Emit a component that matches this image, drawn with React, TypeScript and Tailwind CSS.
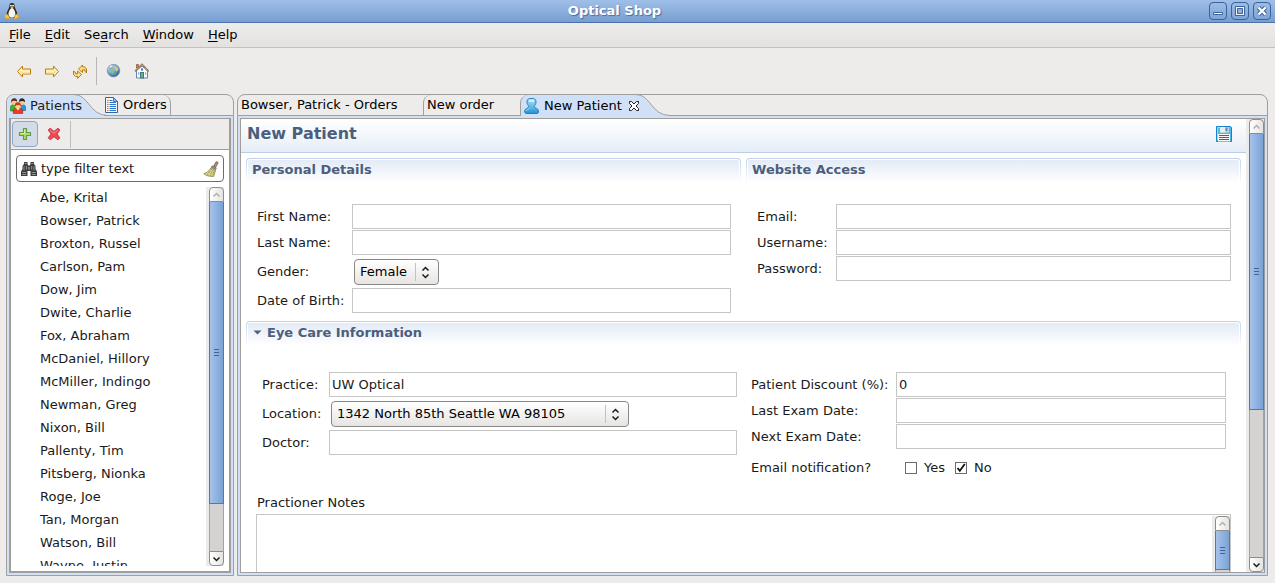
import { useState, type ReactNode } from "react";

const patients = [
  "Abe, Krital",
  "Bowser, Patrick",
  "Broxton, Russel",
  "Carlson, Pam",
  "Dow, Jim",
  "Dwite, Charlie",
  "Fox, Abraham",
  "McDaniel, Hillory",
  "McMiller, Indingo",
  "Newman, Greg",
  "Nixon, Bill",
  "Pallenty, Tim",
  "Pitsberg, Nionka",
  "Roge, Joe",
  "Tan, Morgan",
  "Watson, Bill",
  "Wayne, Justin",
];

const menus: [string, string, string][] = [
  ["", "F", "ile"],
  ["", "E", "dit"],
  ["Se", "a", "rch"],
  ["", "W", "indow"],
  ["", "H", "elp"],
];

/* ---------- icons ---------- */

function Penguin() {
  return (
    <svg width="16" height="18" viewBox="0 0 16 18" aria-hidden="true">
      <path d="M8 1C6 1 5.3 2.2 5.4 4C5.5 6 3.4 8 2.8 11C2.6 12.6 3.3 15 5 16H11C13 15 13.5 12.6 13 10.5C12.4 8 10.6 6 10.6 4C10.6 2.2 10 1 8 1Z" fill="#2a2623" />
      <path d="M8 5.5C6 6.6 4.4 9.5 4.4 12C4.6 14.6 6 15.8 8 15.8C10 15.8 11.2 14.6 11.4 12C11.4 9.5 10 6.6 8 5.5Z" fill="#f4f4f2" />
      <circle cx="6.9" cy="3.6" r="0.9" fill="#fff" />
      <circle cx="9.1" cy="3.6" r="0.9" fill="#fff" />
      <path d="M6.2 5L8 4.2L9.8 5L8 6.4Z" fill="#f5b21c" />
      <path d="M0.8 13.4L3 12L5.8 15.4L5.2 17L0.8 16Z" fill="#fbc63a" stroke="#d99316" strokeWidth="0.5" />
      <path d="M10.6 13.6L12.8 12L15.2 14.8L11.6 17L10.3 16.4Z" fill="#fbc63a" stroke="#d99316" strokeWidth="0.5" />
    </svg>
  );
}

function Arrow({ right = false }: { right?: boolean }) {
  return (
    <svg width="16" height="16" viewBox="0 0 16 16" aria-hidden="true">
      <path
        d={right ? "M14.5 8.5L9.5 3V6H1.5V11H9.5V14Z" : "M1.5 8.5L6.5 3V6H14.5V11H6.5V14Z"}
        fill="#fdf0b4"
        stroke="#b97d10"
        strokeLinejoin="round"
      />
      <path d={right ? "M2.5 10H10.5V9L12 8.5" : "M13.5 10H5.5V9L4 8.5"} fill="none" stroke="#f9d979" />
    </svg>
  );
}

function RefreshIcon() {
  return (
    <svg width="16" height="16" viewBox="0 0 16 16" aria-hidden="true">
      <g fill="#fbe08a" stroke="#b97d10" strokeLinejoin="round">
        <path d="M6.5 6L10.5 2V3.8H12.5L14.5 6V10L13 8.2V6.8H10.5V9.5Z" />
        <path d="M9.5 11.5L5.5 15.5V13.5H3.5L1.5 11.5V8L3.5 9.5V10.8H5.5V8Z" />
      </g>
    </svg>
  );
}

function Globe() {
  return (
    <svg width="16" height="16" viewBox="0 0 16 16" aria-hidden="true">
      <defs>
        <radialGradient id="globe" cx="0.3" cy="0.28" r="0.85">
          <stop offset="0" stopColor="#dcecfa" />
          <stop offset="0.5" stopColor="#6f9fd0" />
          <stop offset="1" stopColor="#27578c" />
        </radialGradient>
      </defs>
      <circle cx="8.5" cy="7.6" r="6.3" fill="url(#globe)" stroke="#6e86a2" strokeWidth="0.6" />
      <path d="M4 4.8L7 3.4L9 5.2L8 7L9.2 9L7.8 11.6L6 8.8L4 7.4Z" fill="#8ebb9c" />
      <path d="M9.4 2.6L12.6 4.2L13.6 7L11.6 8.4L10 6.6Z" fill="#cdcb86" />
      <path d="M8.4 9.6L11.4 9L10.2 12.2Z" fill="#6fa96d" />
      <path d="M5 4.2L7 3" stroke="#fff" strokeWidth="1" />
    </svg>
  );
}

function House() {
  return (
    <svg width="16" height="16" viewBox="0 0 16 16" aria-hidden="true">
      <path d="M3.5 7.5L9 3L14.5 7.5V15H3.5Z" fill="#fafcff" stroke="#6487ae" />
      <path d="M3.5 1.5H5.5V5H3.5Z" fill="#c98a70" stroke="#8a5d48" strokeWidth="0.8" />
      <path d="M2 8.4L9 1.6L15.6 8.4" fill="none" stroke="#8d6c4e" strokeWidth="1.8" />
      <path d="M2.4 8L9 1.6L15.2 8" fill="none" stroke="#ecd7b4" strokeWidth="0.8" strokeDasharray="1.2 0.8" />
      <rect x="8" y="5.4" width="2" height="2.2" fill="#4378b8" />
      <rect x="7.5" y="9.5" width="3" height="5.5" fill="#76b94c" stroke="#3e72a5" />
      <rect x="5" y="9.5" width="1.3" height="2" fill="#7ba0c8" />
      <rect x="12" y="9.5" width="1.2" height="2" fill="#7ba0c8" />
    </svg>
  );
}

function PeopleIcon() {
  return (
    <svg width="16" height="16" viewBox="0 0 16 16" aria-hidden="true">
      <path d="M0.5 13V9.5C0.5 7.4 2 6.4 4 6.4S7.5 8 7.5 9.5V13Z" fill="#45b02f" stroke="#1d7d15" strokeWidth="0.6" />
      <path d="M8.5 12.5V9.5C8.5 7.4 10.4 6.4 12.2 6.4S15.6 7.6 15.6 9.5V12.5Z" fill="#2f93d4" stroke="#155e94" strokeWidth="0.6" />
      <circle cx="4.2" cy="4.2" r="2.7" fill="#f6c791" />
      <path d="M1.2 4.8V3C1.4 1 3 0.3 4.2 0.3S7.4 1 7.1 3.8C6 2.6 4 2.4 2.4 3Z" fill="#5c2912" />
      <circle cx="12" cy="4.2" r="2.7" fill="#f6c791" />
      <path d="M9.1 4V3C9.2 1 11 0.3 12 0.3S15.2 1 15 4.2C13.6 2.6 11.2 2.6 9.1 4Z" fill="#33231b" />
      <path d="M3.3 15.6V13C3.3 10.8 5.4 10 8 10S12.7 10.8 12.7 13V15.6Z" fill="#ee3a1e" stroke="#a31a08" strokeWidth="0.6" />
      <circle cx="8" cy="8" r="2.9" fill="#f9cf98" />
      <path d="M4.9 8.3V6.7C5.1 4.8 6.8 4.2 8 4.2S11.1 4.8 11.1 8.2C10 6.6 7.2 6.4 4.9 8.3Z" fill="#b8431a" />
      <path d="M6.6 10.6L8 12.4L9.4 10.6Z" fill="#fff3d8" />
    </svg>
  );
}

function DocumentIcon() {
  return (
    <svg width="16" height="16" viewBox="0 0 16 16" aria-hidden="true">
      <path d="M1.5 0.5H9.5L13.5 4.5V15.5H1.5Z" fill="#f2f7fd" stroke="#2f66a6" />
      <path d="M9.5 0.5V4.5H13.5Z" fill="#9fc0e6" stroke="#2f66a6" strokeWidth="0.8" />
      <path d="M5.5 3.5H8.5M5.5 5.5H12M5.5 7.5H12M5.5 9.5H12M5.5 11.5H12M5.5 13.5H12" stroke="#2f7ad0" strokeWidth="1.1" />
      <path d="M3 3.5H4.6M3 5.5H4.6M3 7.5H4.6M3 9.5H4.6M3 11.5H4.6M3 13.5H4.6" stroke="#b9844e" strokeWidth="1.1" />
    </svg>
  );
}

function PersonIcon() {
  return (
    <svg width="16" height="18" viewBox="0 0 16 18" aria-hidden="true">
      <defs>
        <linearGradient id="person" x1="0" y1="0" x2="0" y2="1">
          <stop offset="0" stopColor="#a9dcf7" />
          <stop offset="0.55" stopColor="#6bbbe8" />
          <stop offset="1" stopColor="#1f8fd6" />
        </linearGradient>
      </defs>
      <path
        d="M5.4 1.5H9.6C11.2 1.9 12 3.2 12 5C12 7 11 8.2 10.2 9.2C10.2 10.4 11 10.9 12.4 11.3C14 12 14.5 13.4 14.5 15.3L13.6 16.5H1.9L0.6 15.3C0.6 13.4 1.2 12 2.8 11.3C4 10.9 4.8 10.4 4.8 9.2C4 8.2 3 7 3 5C3 3.2 3.8 1.9 5.4 1.5Z"
        fill="url(#person)"
        stroke="#2382bf"
      />
      <path d="M5.6 2.6H9.4L10.4 5H4.6Z" fill="#e3f5fe" opacity="0.8" />
      <path d="M2 14C2.5 12.5 4 12.3 5.5 11.6" fill="none" stroke="#a5dcf8" />
    </svg>
  );
}

function PlusIcon() {
  return (
    <svg width="16" height="16" viewBox="0 0 16 16" aria-hidden="true">
      <path d="M6.5 2.5H9.5V6.5H13.5V9.5H9.5V13.5H6.5V9.5H2.5V6.5H6.5Z" fill="#b7d95e" stroke="#5a9c53" strokeWidth="1.2" strokeLinejoin="round" />
      <path d="M7.5 3.5V7.5H3.5" fill="none" stroke="#dcee9b" />
    </svg>
  );
}

function DeleteIcon() {
  return (
    <svg width="16" height="16" viewBox="0 0 16 16" aria-hidden="true">
      <path d="M2.2 4L4.2 2.2L8 5.4L12 2.2L13.8 4L11 8L13.8 11.8L12 13.8L8 10.8L4.2 13.8L2.2 11.8L5.2 8Z" fill="#ec4a52" stroke="#cf3540" strokeLinejoin="round" />
      <path d="M3.8 4.2L8 7.3L12 4" fill="none" stroke="#f58c8e" />
    </svg>
  );
}

function Binoculars() {
  return (
    <svg width="16" height="16" viewBox="0 0 16 16" aria-hidden="true">
      <path d="M3 1H6.5V3L7.3 4.5H8.7L9.5 3V1H13V3L14.5 5V8L16 10.5V15H9.5V10H6.5V15H0V10.5L1.5 8V5L3 3Z" fill="#3c3f3e" />
      <path d="M3.7 2.5H5.7M10.3 2.5H12.3M3 5V9.5M5.5 5V8.5M10.7 5V8.5M13 5V9.5" stroke="#8e9290" />
      <path d="M1.2 11.5H5.2M10.8 11.5H14.8M1.2 13.5H5.2M10.8 13.5H14.8" stroke="#a9adab" strokeWidth="0.8" />
      <path d="M7 6H9V8.5H7Z" fill="#7d817f" />
    </svg>
  );
}

function Broom() {
  return (
    <svg width="16" height="16" viewBox="0 0 16 16" aria-hidden="true">
      <path d="M13.2 0.6L15.2 1.6L12.6 6.6L10.4 5.4Z" fill="#a98b77" stroke="#6f5546" strokeWidth="0.7" />
      <path d="M9 4.8L13.4 7L12.6 8.6L8.2 6.6Z" fill="#8c8f93" stroke="#595c60" strokeWidth="0.5" />
      <path d="M8 6.8L12.6 9L10.6 15.5L6.5 15.2L3.5 14.5L0.8 12.8C3.5 12 6.5 9.6 8 6.8Z" fill="#ddd38a" stroke="#8a8348" strokeWidth="0.8" />
      <path d="M8.6 8.2L4 13.8M10 8.8L7 14.8M11.4 9.4L9.6 15" stroke="#77713e" strokeWidth="0.9" strokeDasharray="1 1" />
    </svg>
  );
}

function Floppy() {
  return (
    <svg width="16" height="16" viewBox="0 0 16 16" aria-hidden="true">
      <path d="M0.5 0.5H14.5L15.5 1.5V15.5H0.5Z" fill="#4fb9ec" stroke="#1a83c4" />
      <path d="M1.5 14V1.5H4" fill="none" stroke="#9bdcf9" />
      <path d="M4 1H13V6.5H4Z" fill="#c9d3d9" />
      <path d="M4 1H9V6.5H4Z" fill="#e9eef0" />
      <rect x="9.5" y="1.5" width="2" height="3.5" fill="#5c8db3" />
      <rect x="2" y="8" width="12" height="7.5" fill="#f6f6f4" />
      <path d="M3 9.5H13M3 11.5H13M3 13.5H13" stroke="#5b6063" />
    </svg>
  );
}

function CloseTab() {
  return (
    <svg width="12" height="12" viewBox="0 0 12 12" aria-hidden="true">
      <path
        d="M1.5 1.5H3.5L6 4L8.5 1.5H10.5V3.5L8 6L10.5 8.5V10.5H8.5L6 8L3.5 10.5H1.5V8.5L4 6L1.5 3.5Z"
        fill="#fff"
        stroke="#222"
      />
    </svg>
  );
}

/* ---------- shared pieces ---------- */

function TabCurve() {
  return (
    <svg width="34" height="21" viewBox="0 0 34 21" className="shrink-0" aria-hidden="true">
      <path d="M0 0C15 0 15 20.5 34 20.5V21H0Z" fill="#d0e1f7" />
      <path d="M0 -0.5C15 -0.5 15 20.5 34 20.5" fill="none" stroke="#a19f9b" />
    </svg>
  );
}

function Chevron({ up = false, muted = false }: { up?: boolean; muted?: boolean }) {
  return (
    <svg width="9" height="6" viewBox="0 0 9 6" aria-hidden="true">
      <path
        d={up ? "M1.5 4.5L4.5 1.5L7.5 4.5" : "M1.5 1.5L4.5 4.5L7.5 1.5"}
        fill="none"
        stroke={muted ? "#b1b0ae" : "#1a1a1a"}
        strokeWidth="1.5"
      />
    </svg>
  );
}

function ScrollBar({ thumb, rest }: { thumb: number; rest: number }) {
  return (
    <div aria-hidden="true" className="flex w-[18px] shrink-0 bg-[#ecebea] pl-[3px]">
      <div className="flex w-[15px] flex-col">
        <div className="flex h-[15px] shrink-0 items-center justify-center rounded-t border border-[#8f8d8a] bg-linear-to-r from-white to-[#e4e3e1]">
          <Chevron up muted />
        </div>
        <div
          className="flex min-h-0 flex-col items-center justify-center gap-[2px] border border-t-0 border-[#4f79b4] bg-linear-to-r from-[#a5c3ea] to-[#7ba2d6]"
          style={{ flex: `${thumb} 1 0px` }}
        >
          <div className="h-px w-[5px] bg-[#3d659c]" />
          <div className="h-px w-[5px] bg-[#3d659c]" />
          <div className="h-px w-[5px] bg-[#3d659c]" />
        </div>
        <div className="min-h-0 border-x border-[#a5a3a0] bg-[#d4d3d1]" style={{ flex: `${rest} 1 0px` }} />
        <div className="flex h-[15px] shrink-0 items-center justify-center rounded-b border border-[#8f8d8a] bg-linear-to-r from-white to-[#e4e3e1]">
          <Chevron />
        </div>
      </div>
    </div>
  );
}

function SectionHead({ children, twistie = false }: { children: ReactNode; twistie?: boolean }) {
  return (
    <div className="rounded-t bg-linear-to-b from-[#c0d0ea] to-white px-px pt-px">
      <h2 className="flex h-6 items-center gap-[5px] rounded-t-[3px] border-x border-t border-white bg-linear-to-b from-[#e3ebf6] to-white pb-1 pl-1 font-bold text-[#4c5e7c]">
        {twistie && (
          <svg width="9" height="5" viewBox="0 0 9 5" className="ml-px" aria-hidden="true">
            <path d="M0.5 0.5H8.5L4.5 4.5Z" fill="#4c5e7c" />
          </svg>
        )}
        {children}
      </h2>
    </div>
  );
}

function Field({ id, label, value = "" }: { id: string; label: string; value?: string }) {
  return (
    <>
      <label htmlFor={id}>{label}</label>
      <input
        id={id}
        defaultValue={value}
        className="h-[25px] w-full min-w-0 border border-[#c6c6c6] bg-white px-[2px] outline-none"
      />
    </>
  );
}

function Combo({ id, label, options, width }: { id: string; label: string; options: string[]; width: string }) {
  return (
    <>
      <label htmlFor={id}>{label}</label>
      <div className="grid pt-[3px] pb-[2px] pl-px">
        <div className={`col-start-1 row-start-1 ml-px grid ${width}`}>
          <select
            id={id}
            className="col-start-1 row-start-1 h-[26px] w-full appearance-none rounded border border-[#8a8885] bg-linear-to-b from-white to-[#e6e5e3] pl-[5px] text-black outline-none"
          >
            {options.map((o) => (
              <option key={o}>{o}</option>
            ))}
          </select>
          <div className="pointer-events-none col-start-1 row-start-1 my-1 flex w-6 flex-col items-center justify-center gap-px justify-self-end border-l border-[#c3c2c0] pr-1">
            <Chevron up />
            <Chevron />
          </div>
        </div>
      </div>
    </>
  );
}

function WindowButton({ label, children }: { label: string; children: ReactNode }) {
  return (
    <button
      aria-label={label}
      className="flex size-[18px] items-center justify-center rounded border border-[#3b629b] bg-linear-to-b from-[#9dbce5] to-[#7fa4d6]"
    >
      <svg width="12" height="12" viewBox="0 0 12 12" aria-hidden="true">
        {children}
      </svg>
    </button>
  );
}

function Check({ label, checked, onChange }: { label: string; checked: boolean; onChange: () => void }) {
  return (
    <label className="flex items-center gap-[7px]">
      <span className="grid size-3">
        <input
          type="checkbox"
          checked={checked}
          onChange={onChange}
          className="col-start-1 row-start-1 size-3 appearance-none border border-[#6b6b6b] bg-white"
        />
        {checked && (
          <svg viewBox="0 0 12 12" className="pointer-events-none col-start-1 row-start-1 size-3" aria-hidden="true">
            <path d="M2.5 6L4.8 8.8L9.8 2" fill="none" stroke="#111" strokeWidth="1.8" />
          </svg>
        )}
      </span>
      {label}
    </label>
  );
}

/* ---------- page ---------- */

export default function App() {
  const [notify, setNotify] = useState(false);

  return (
    <div className="flex h-screen flex-col overflow-hidden bg-[#edecea] font-['DejaVu_Sans',sans-serif] text-[13px] leading-4 text-[#1a1a1a]">
      <header className="flex h-[23px] shrink-0 items-center border-b border-[#4b73ab] bg-linear-to-b from-[#9fbfe9] to-[#789ed0] pr-1 pl-1">
        <Penguin />
        <h1 className="flex-1 text-center font-bold text-white [text-shadow:1px_1px_1px_#4a6c9c]">Optical Shop</h1>
        <div className="flex gap-1">
          <WindowButton label="Minimize">
            <path d="M1.5 7.5H10.5V9.5H1.5Z" fill="#fff" stroke="#3b629b" />
          </WindowButton>
          <WindowButton label="Maximize">
            <path d="M1.5 1.5H10.5V10.5H1.5Z" fill="#f2f6fc" stroke="#3b629b" />
            <path d="M3.5 3.5H8.5V8.5H3.5Z" fill="#8fb0de" stroke="#3b629b" />
          </WindowButton>
          <WindowButton label="Close">
            <path d="M2.5 2.5L9.5 9.5M9.5 2.5L2.5 9.5" stroke="#3b629b" strokeWidth="4.4" />
            <path d="M2.5 2.5L9.5 9.5M9.5 2.5L2.5 9.5" stroke="#fff" strokeWidth="2.4" />
          </WindowButton>
        </div>
      </header>

      <nav className="flex h-[25px] shrink-0 items-center gap-[14px] border-b border-[#c3c2c0] bg-linear-to-b from-[#edecea] to-[#e3e2e0] pl-[9px] text-black">
        {menus.map(([a, key, b]) => (
          <button key={key}>
            {a}
            <span className="underline underline-offset-2">{key}</span>
            {b}
          </button>
        ))}
      </nav>

      <div className="flex h-[46px] shrink-0 items-center gap-3 pl-4">
        <button aria-label="Back"><Arrow /></button>
        <button aria-label="Forward"><Arrow right /></button>
        <button aria-label="Refresh"><RefreshIcon /></button>
        <div className="-mx-1 h-7 w-px bg-[#b9b8b6]" />
        <button aria-label="Web"><Globe /></button>
        <button aria-label="Home"><House /></button>
      </div>

      <div className="flex min-h-0 flex-1 gap-[3px] pr-[7px] pb-[7px] pl-[6px]">
        <aside className="flex w-[228px] shrink-0 flex-col rounded-t-lg border border-[#a19f9b] bg-[#edecea]">
          <div role="tablist" className="flex h-[21px] shrink-0">
            <div className="flex rounded-tl-lg bg-[#d0e1f7]">
              <button role="tab" aria-selected="true" className="relative z-10 -mr-2 flex items-center gap-1 pl-[3px]">
                <PeopleIcon />
                Patients
              </button>
            </div>
            <TabCurve />
            <button role="tab" aria-selected="false" className="-ml-1 flex items-center gap-[3px] rounded-tr-lg border-r border-b border-[#a19f9b] pr-[3px] text-black">
              <DocumentIcon />
              Orders
            </button>
            <div className="flex-1 border-b border-[#a19f9b]" />
          </div>
          <div className="flex min-h-0 flex-1 flex-col bg-[#d0e1f7] p-[2px]">
            <div className="flex min-h-0 flex-1 flex-col border-2 border-t border-[#a19d99] bg-white">
              <div className="flex h-[31px] shrink-0 items-center gap-2 border-b border-[#a19d99] bg-[#edecea] pl-px">
                <button aria-label="Add" className="flex size-[26px] items-center justify-center rounded border border-[#8ea6c8] bg-[#d3dbe7]">
                  <PlusIcon />
                </button>
                <button aria-label="Delete"><DeleteIcon /></button>
                <div className="h-[27px] w-px bg-[#c0bfbd]" />
              </div>
              <div className="flex min-h-0 flex-1 flex-col p-[5px]">
                <div className="flex h-[27px] shrink-0 items-center gap-1 rounded border border-[#6f6d6b] px-1">
                  <Binoculars />
                  <input aria-label="Filter patients" defaultValue="type filter text" className="min-w-0 flex-1 outline-none" />
                  <button aria-label="Clear filter"><Broom /></button>
                </div>
                <div className="mt-[5px] flex min-h-0 flex-1">
                  <ul className="min-w-0 flex-1 overflow-hidden pl-6">
                    {patients.map((p) => (
                      <li key={p} className="h-[23px] pt-[3px]">{p}</li>
                    ))}
                  </ul>
                  <ScrollBar thumb={302} rest={47} />
                </div>
              </div>
            </div>
          </div>
        </aside>

        <main className="flex min-w-0 flex-1 flex-col rounded-t-lg border border-[#a19f9b]">
          <div role="tablist" className="flex h-[21px] shrink-0 text-black">
            <button role="tab" aria-selected="false" className="w-[185px] border-b border-[#a19f9b] pl-[3px] text-left">
              Bowser, Patrick - Orders
            </button>
            <button role="tab" aria-selected="false" className="w-[97px] rounded-tl-lg border-b border-l border-[#a19f9b] pl-[3px] text-left">
              New order
            </button>
            <div className="flex rounded-tl-lg border-l border-[#a19f9b] bg-[#d0e1f7]">
              <div className="relative z-10 -mr-1 flex items-center gap-[6px] pl-[3px]">
                <button role="tab" aria-selected="true" className="flex items-center gap-1">
                  <PersonIcon />
                  New Patient
                </button>
                <button aria-label="Close tab"><CloseTab /></button>
              </div>
            </div>
            <TabCurve />
            <div className="flex-1 border-b border-[#a19f9b]" />
          </div>
          <div className="flex min-h-0 flex-1 flex-col bg-[#d0e1f7] p-[2px]">
            <div className="flex min-h-0 flex-1 border border-[#a19d99] bg-white">
              <div className="min-w-0 flex-1 overflow-hidden">
                <div className="flex h-[34px] items-center justify-between border-b border-[#bccde8] bg-linear-to-b from-white to-[#e6edf6] pr-[14px] pb-[3px] pl-[6px]">
                  <h2 className="text-base font-bold text-[#4c5e7c]">New Patient</h2>
                  <button aria-label="Save"><Floppy /></button>
                </div>

                <form className="px-[5px] pt-[5px]" onSubmit={(e) => e.preventDefault()}>
                  <div className="grid grid-cols-2 gap-[5px]">
                    <section>
                      <SectionHead>Personal Details</SectionHead>
                      <div className="grid grid-cols-[94px_1fr] items-center gap-x-px gap-y-px pt-[21px] pr-[10px] pl-[11px]">
                        <Field id="first" label="First Name:" />
                        <Field id="last" label="Last Name:" />
                        <Combo id="gender" label="Gender:" options={["Female", "Male"]} width="w-[85px]" />
                        <Field id="dob" label="Date of Birth:" />
                      </div>
                    </section>
                    <section>
                      <SectionHead>Website Access</SectionHead>
                      <div className="grid grid-cols-[78px_1fr] items-center gap-x-px gap-y-px pt-[21px] pr-[10px] pl-[11px]">
                        <Field id="email" label="Email:" />
                        <Field id="username" label="Username:" />
                        <Field id="password" label="Password:" />
                      </div>
                    </section>
                  </div>

                  <section className="mt-2">
                    <SectionHead twistie>Eye Care Information</SectionHead>
                    <div className="grid grid-cols-2 gap-[5px] pt-[26px]">
                      <div className="grid grid-cols-[66px_1fr] content-start items-center gap-x-px gap-y-px pr-[4px] pl-[16px]">
                        <Field id="practice" label="Practice:" value="UW Optical" />
                        <Combo id="location" label="Location:" options={["1342 North 85th Seattle WA 98105"]} width="w-[298px]" />
                        <Field id="doctor" label="Doctor:" />
                      </div>
                      <div className="pr-[15px] pl-[5px]">
                        <div className="grid grid-cols-[144px_1fr] items-center gap-x-px gap-y-px">
                          <Field id="discount" label="Patient Discount (%):" value="0" />
                          <Field id="lastexam" label="Last Exam Date:" />
                          <Field id="nextexam" label="Next Exam Date:" />
                        </div>
                        <fieldset className="mt-[11px] flex items-center gap-[10px]">
                          <legend className="float-left w-[144px]">Email notification?</legend>
                          <Check label="Yes" checked={notify} onChange={() => setNotify(true)} />
                          <Check label="No" checked={!notify} onChange={() => setNotify(false)} />
                        </fieldset>
                      </div>
                    </div>
                    <div className="px-[10px] pt-[19px]">
                      <label htmlFor="notes" className="ml-px block">Practioner Notes</label>
                      <div className="mt-[3px] flex h-[92px] border border-[#c6c6c6] pt-px">
                        <textarea id="notes" className="min-w-0 flex-1 resize-none overflow-hidden px-[2px] outline-none" />
                        <ScrollBar thumb={39} rest={20} />
                      </div>
                    </div>
                  </section>
                </form>
              </div>
              <ScrollBar thumb={276} rest={147} />
            </div>
          </div>
        </main>
      </div>
    </div>
  );
}
